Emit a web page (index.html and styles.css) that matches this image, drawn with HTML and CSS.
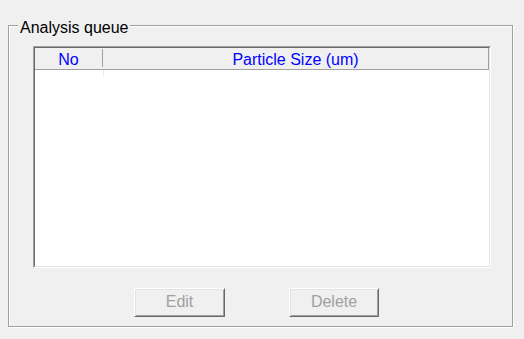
FILE: index.html
```html
<!DOCTYPE html>
<html>
<head>
<meta charset="utf-8">
<link rel="stylesheet" href="styles.css">
</head>
<body>
<div class="group">
  <div class="title">Analysis queue</div>
  <div class="list">
    <div class="list-inner">
      <div class="header">
        <div class="col col-no">No</div>
        <div class="divider"></div>
        <div class="col col-size">Particle Size (um)</div>
      </div>
      <div class="body">
        <div class="trace"></div>
      </div>
    </div>
  </div>
  <div class="buttons">
    <div class="btn">Edit</div>
    <div class="btn">Delete</div>
  </div>
</div>
</body>
</html>
```
FILE: styles.css
```css
html, body {
  margin: 0;
  padding: 0;
  background: #f0f0f0;
}
body {
  width: 524px;
  height: 339px;
  overflow: hidden;
  font-family: "Liberation Sans", Arial, sans-serif;
  font-size: 16px;
  padding-top: 25px;
  box-sizing: border-box;
}
.group {
  margin: 0 11px 0 8px;
  height: 302px;
  box-sizing: border-box;
  border: 1px solid #a0a0a0;
  box-shadow: inset 1px 1px #fff, 1px 1px #fff;
}
.title {
  display: block;
  width: fit-content;
  margin: -7px 0 0 9px;
  padding: 0 1px 0 2px;
  line-height: 18px;
  background: #f0f0f0;
  color: #000;
}
.list {
  margin: 9px 0 0 24px;
  width: 458px;
  height: 222px;
  box-sizing: border-box;
  border-style: solid;
  border-width: 1px;
  border-color: #a0a0a0 #fff #fff #a0a0a0;
}
.list-inner {
  height: 100%;
  box-sizing: border-box;
  border-style: solid;
  border-width: 1px;
  border-color: #696969 #e3e3e3 #e3e3e3 #696969;
  background: #fff;
  display: flex;
  flex-direction: column;
}
.header {
  display: flex;
  height: 22px;
  box-sizing: border-box;
  background: #f0f0f0;
  border-bottom: 1px solid #a0a0a0;
  border-right: 1px solid #a0a0a0;
  color: #0000ff;
}
.col {
  line-height: 21px;
  padding-top: 1px;
  text-align: center;
  box-sizing: border-box;
}
.col-no {
  width: 67px;
}
.divider {
  width: 1px;
  margin: 1px 0 2px;
  background: #a0a0a0;
}
.col-size {
  flex: 1;
}
.body {
  flex: 1;
  padding-left: 68px;
}
.trace {
  width: 1px;
  height: 7px;
  background: #f0f0f0;
}
.buttons {
  display: flex;
  gap: 64px;
  margin: 20px 0 0 125px;
}
.btn {
  width: 91px;
  height: 29px;
  box-sizing: border-box;
  border-style: solid;
  border-width: 1px;
  border-color: #fff #696969 #696969 #fff;
  box-shadow: inset 1px 1px #e3e3e3, inset -1px -1px #a0a0a0;
  background: #f0f0f0;
  color: #a0a0a0;
  text-align: center;
  line-height: 26px;
}
.btn + .btn {
  width: 90px;
}
```
